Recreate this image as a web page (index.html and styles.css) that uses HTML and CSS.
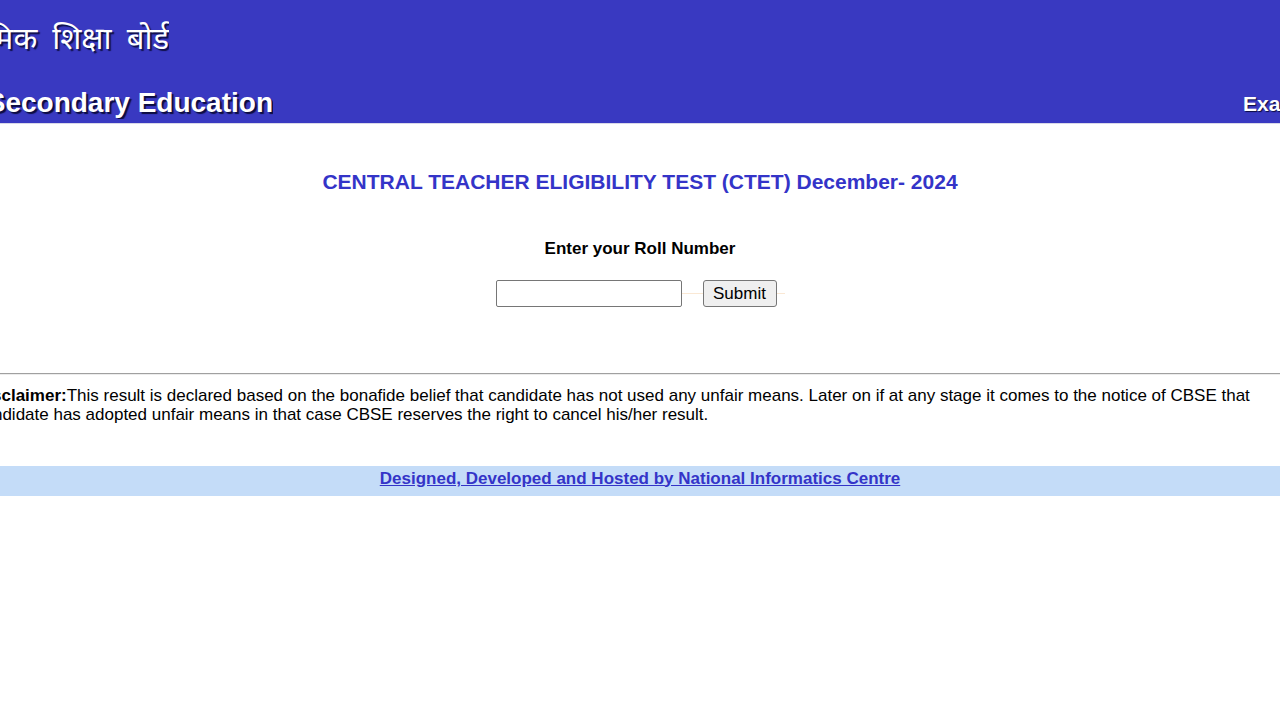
FILE: index.html
```html
<!DOCTYPE html>
<html lang="en">
<head>
<meta charset="utf-8">
<title>CTET December 2024 Result</title>
<link rel="stylesheet" href="styles.css">
</head>
<body>
<header class="banner">
  <div class="hi-row"><span class="hindi">केन्द्रीय माध्यमिक शिक्षा बोर्ड</span></div>
  <div class="en-row">
    <div class="en-clip"><span class="english">Central Board of Secondary Education</span></div>
    <div class="exam-clip"><span class="exam">Examination Results</span></div>
  </div>
</header>
<main class="content">
  <h1 class="title">CENTRAL TEACHER ELIGIBILITY TEST (CTET) December- 2024</h1>
  <form class="roll-form">
    <label class="roll-label" for="roll">Enter your Roll Number</label>
    <div class="roll-row">
      <input class="roll-input" id="roll" type="text">
      <span class="gap-line"></span>
      <button class="submit-btn" type="button">Submit</button>
      <span class="gap-line short"></span>
    </div>
  </form>
  <hr class="rule">
  <p class="disclaimer"><b>Disclaimer:</b>This result is declared based on the bonafide belief that candidate has not used any unfair means. Later on if at any stage it comes to the notice of CBSE that candidate has adopted unfair means in that case CBSE reserves the right to cancel his/her result.</p>
</main>
<footer class="footer">
  <a class="footer-link" href="#">Designed, Developed and Hosted by National Informatics Centre</a>
</footer>
</body>
</html>
```

FILE: styles.css
```css
html, body {
  margin: 0;
  padding: 0;
  background: #ffffff;
  overflow: hidden;
}
body {
  font-family: "Liberation Sans", Arial, sans-serif;
  color: #000;
}
.banner {
  background: #3939c1;
  height: 124px;
  border-bottom: 1px solid #d8d8e8;
  box-sizing: border-box;
  overflow: hidden;
  display: flex;
  flex-direction: column;
}
.hi-row {
  width: 169px;
  height: 78px;
  display: flex;
  justify-content: flex-end;
  align-items: center;
  overflow: hidden;
  flex: none;
}
.hindi {
  white-space: nowrap;
  color: #ffffff;
  font-family: "Noto Sans Devanagari", "Noto Sans", "Liberation Sans", sans-serif;
  font-size: 31px;
  word-spacing: 7px;
  text-shadow: 2px 2px 1px #10104a;
  margin-top: 4px;
}
.en-row {
  display: flex;
  justify-content: space-between;
  align-items: center;
  height: 45px;
  flex: none;
}
.en-clip {
  width: 273px;
  display: flex;
  justify-content: flex-end;
  overflow: hidden;
  flex: none;
  padding-top: 5px;
}
.english {
  white-space: nowrap;
  color: #ffffff;
  font-weight: bold;
  font-size: 28px;
  text-shadow: 2px 2px 1px #0c0c40;
}
.exam-clip {
  width: 37px;
  overflow: hidden;
  flex: none;
  padding-top: 6px;
}
.exam {
  white-space: nowrap;
  color: #ffffff;
  font-weight: bold;
  font-size: 21px;
  text-shadow: 1px 1px 1px #0c0c40;
}
.content {
  display: flex;
  flex-direction: column;
  align-items: center;
}
.title {
  margin: 46px 0 0;
  font-size: 21px;
  font-weight: bold;
  color: #3434c8;
  line-height: 24px;
}
.roll-form {
  display: flex;
  flex-direction: column;
  align-items: center;
  margin-top: 45px;
}
.roll-label {
  font-size: 17px;
  font-weight: bold;
  line-height: 20px;
}
.roll-row {
  display: flex;
  align-items: center;
  margin-top: 21px;
}
.roll-input {
  width: 186px;
  height: 27px;
  box-sizing: border-box;
  border: 1px solid #767676;
  border-radius: 2px;
  padding: 1px 2px;
  font-size: 16px;
  margin: 0;
}
.gap-line {
  width: 21px;
  height: 1px;
  background: #fae8d4;
}
.gap-line.short {
  width: 8px;
}
.submit-btn {
  height: 27px;
  width: 74px;
  box-sizing: border-box;
  border: 1px solid #767676;
  border-radius: 3px;
  background: #efefef;
  font-family: "Liberation Sans", Arial, sans-serif;
  font-size: 17px;
  padding: 0 4px;
  margin: 0;
  color: #000;
}
.rule {
  align-self: stretch;
  margin: 66px 0 0;
  border: none;
  border-top: 1px solid #a0a0a0;
  border-bottom: 1px solid #ececec;
  height: 0;
}
.disclaimer {
  align-self: flex-start;
  margin: 11px 0 0 -25px;
  width: 1290px;
  font-size: 17px;
  line-height: 19px;
}
.footer {
  margin-top: 42px;
  background: #c4dcf8;
  height: 30px;
  display: flex;
  justify-content: center;
  align-items: center;
  padding-bottom: 5px;
  box-sizing: border-box;
}
.footer-link {
  color: #3434c8;
  font-size: 17px;
  font-weight: bold;
  text-decoration: underline;
}
```
